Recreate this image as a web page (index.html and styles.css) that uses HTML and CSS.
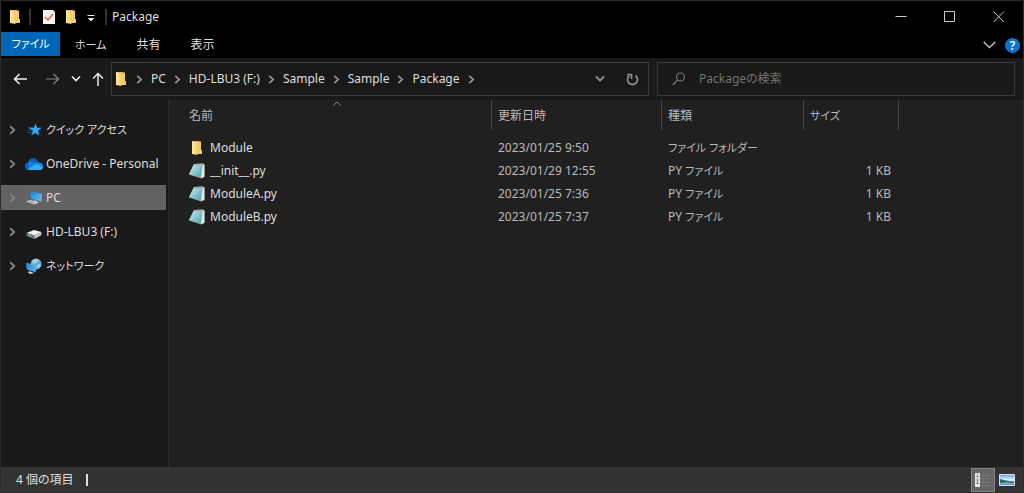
FILE: index.html
```html
<!DOCTYPE html>
<html lang="ja">
<head>
<meta charset="utf-8">
<meta name="viewport" content="width=device-width, initial-scale=1">
<title>Package</title>
<link rel="stylesheet" href="styles.css">
</head>
<body>
<svg class="defs" aria-hidden="true">
  <defs>
    <linearGradient id="folder-front" x1="0" x2="1"><stop offset="0" stop-color="#ffe9a0"/><stop offset="1" stop-color="#f4cf6b"/></linearGradient>
    <linearGradient id="note-page" x1="0" y1="0" x2="1" y2="1"><stop offset="0" stop-color="#d5f2f7"/><stop offset="1" stop-color="#3f9fb3"/></linearGradient>
    <linearGradient id="screen" x1="0" y1="0" x2="1" y2="1"><stop offset="0" stop-color="#1a86dc"/><stop offset="1" stop-color="#52bcff"/></linearGradient>
    <linearGradient id="landscape" x1="0" y1="0" x2="0" y2="1"><stop offset="0" stop-color="#5c9df0"/><stop offset=".5" stop-color="#e6f5fb"/><stop offset="1" stop-color="#3b87c4"/></linearGradient>
    <symbol id="folder" viewBox="0 0 12 16"><path d="M1 1h7v13H1z" fill="#e3b552"/><path d="M6 1.500h4V10h1v4H6z" fill="#f0cb67"/><path d="M1 1l5.500 2v12L1 14z" fill="url(#folder-front)"/></symbol>
    <symbol id="note" viewBox="0 0 16 16"><path d="M5 1l9-.5 1.500 1V14l-3 1.500L0 11.500z" fill="#b9a67c"/><path d="M5 1l9-.3L11.500 14.500 0 11z" fill="url(#note-page)"/><path d="M14 1l1.300.8V13.500L12 15z" fill="#e6eeee"/><path d="M5 1l9-.3-.3 1.500-9.400.5z" fill="#9badb0"/></symbol>
    <symbol id="chevron" viewBox="0 0 6 8"><path d="M1 .8L4.500 4 1 7.200" fill="none" stroke="currentColor" stroke-width="1.500"/></symbol>
  </defs>
</svg>
<div class="window">
  <header class="titlebar">
    <svg class="folder" aria-hidden="true"><use href="#folder"/></svg>
    <span class="divider"></span>
    <button class="quick" aria-label="プロパティ"><svg width="12" height="16" viewBox="0 0 12 16"><path d="M0 1h10l2 2v12H0z" fill="#f3f3f3"/><path d="M10 1v2h2z" fill="#aaa"/><path d="M2 8l3 3 5-6" fill="none" stroke="#e3663b" stroke-width="1.500"/></svg></button>
    <button class="quick" aria-label="新しいフォルダー"><svg class="folder"><use href="#folder"/></svg></button>
    <button class="quick customize" aria-label="カスタマイズ"><svg width="8" height="8" viewBox="0 0 8 8"><path d="M.5 1.500h7M1.500 4.500h5L4 6.800z" fill="#eee" stroke="#eee"/></svg></button>
    <span class="divider"></span>
    <h1 class="title">Package</h1>
    <div class="controls">
      <button class="control" aria-label="最小化"><svg width="12" height="12" viewBox="0 0 12 12"><path d="M.5 5.500h11"/></svg></button>
      <button class="control" aria-label="最大化"><svg width="12" height="12" viewBox="0 0 12 12"><path d="M.5 .5h10v10H.5z"/></svg></button>
      <button class="control" aria-label="閉じる"><svg width="12" height="12" viewBox="0 0 12 12"><path d="M.5 .5l10.500 10.500M11 .5L.5 11"/></svg></button>
    </div>
  </header>
  <nav class="ribbon">
    <button class="tab active kana">ファイル</button>
    <button class="tab kana">ホーム</button>
    <button class="tab">共有</button>
    <button class="tab">表示</button>
    <div class="ribbon-end">
      <button class="icon-button" aria-label="リボンの展開"><svg width="13" height="8" viewBox="0 0 13 8"><path d="M.7 1l5.800 5.500L12.300 1" fill="none" stroke="#c0c0c0" stroke-width="1.500"/></svg></button>
      <button class="help" aria-label="ヘルプ">?</button>
    </div>
  </nav>
  <div class="toolbar">
    <div class="history">
      <button class="icon-button" aria-label="戻る"><svg width="15" height="12" viewBox="0 0 15 12"><path d="M14 6H1.500M6.500 1l-5 5 5 5" fill="none" stroke="#f0f0f0" stroke-width="1.500"/></svg></button>
      <button class="icon-button" aria-label="進む"><svg width="15" height="12" viewBox="0 0 15 12"><path d="M1 6h12.500M8.500 1l5 5-5 5" fill="none" stroke="#858585" stroke-width="1.200"/></svg></button>
      <button class="icon-button" aria-label="最近表示した場所"><svg width="10" height="8" viewBox="0 0 10 8"><path d="M1 1.500l4 4 4-4" fill="none" stroke="#eee" stroke-width="1.600"/></svg></button>
      <button class="icon-button" aria-label="上へ"><svg width="12" height="15" viewBox="0 0 12 15"><path d="M6 14V1.500M1 6.500l5-5 5 5" fill="none" stroke="#eee" stroke-width="1.500"/></svg></button>
    </div>
    <div class="address">
      <svg class="folder" aria-hidden="true"><use href="#folder"/></svg>
      <svg class="crumb-arrow"><use href="#chevron"/></svg>
      <a href="#">PC</a><svg class="crumb-arrow"><use href="#chevron"/></svg>
      <a href="#">HD-LBU3 (F:)</a><svg class="crumb-arrow"><use href="#chevron"/></svg>
      <a href="#">Sample</a><svg class="crumb-arrow"><use href="#chevron"/></svg>
      <a href="#">Sample</a><svg class="crumb-arrow"><use href="#chevron"/></svg>
      <a href="#">Package</a><svg class="crumb-arrow"><use href="#chevron"/></svg>
      <div class="address-end">
        <button class="address-button" aria-label="以前の場所"><svg width="10" height="8" viewBox="0 0 10 8"><path d="M1 1.500l4 4 4-4" fill="none" stroke="#8c8c8c" stroke-width="2"/></svg></button>
        <button class="address-button" aria-label="更新"><svg width="13" height="13" viewBox="0 0 13 13"><path d="M9.500 2.500A5 5 0 1 1 3.500 2.500" fill="none" stroke="#8c8c8c" stroke-width="1.800"/><path d="M1 1.500h4.500V6" fill="none" stroke="#8c8c8c" stroke-width="1.600"/></svg></button>
      </div>
    </div>
    <label class="search">
      <svg width="14" height="14" viewBox="0 0 14 14" aria-hidden="true"><g fill="none" stroke="#777" stroke-width="1.200"><circle cx="8.500" cy="5" r="4"/><path d="M5.500 8L.7 13"/></g></svg>
      <input type="search" placeholder="Packageの検索" aria-label="Packageの検索">
    </label>
  </div>
  <div class="body">
    <nav class="sidebar">
      <a class="place" href="#"><svg class="expand"><use href="#chevron"/></svg><svg class="place-icon" viewBox="0 0 16 16"><path d="M9.500 1.500l1.600 4.200 4.700.1-3.700 2.900 1.200 4.800-4-2.500-4 2.600 1.400-4.800L3 5.900l4.800-.2z" fill="#2fa8f5"/><path d="M2 5.500h5M1 8h6M2 10.500h5" stroke="#1673b8" stroke-width=".7"/></svg><span class="kana">クイック アクセス</span></a>
      <a class="place" href="#"><svg class="expand"><use href="#chevron"/></svg><svg class="place-icon cloud" viewBox="0 0 16 11"><path d="M3.500 11A3.600 3.600 0 0 1 2.500 3.900 5 5 0 0 1 11.500 2.500L13 5l2 3-2 3z" fill="#0a62b9"/><path d="M3 3.900c2-1 4 0 5.500 1L13 4.200A3.400 3.400 0 0 1 13 11H3z" fill="#1684d8"/><path d="M2 10.500L10 5.500l5.700 2.500A2.500 2.500 0 0 1 13.500 11h-10z" fill="#35aaf1"/></svg><span>OneDrive - Personal</span></a>
      <a class="place selected" href="#"><svg class="expand"><use href="#chevron"/></svg><svg class="place-icon" viewBox="0 0 16 16"><path d="M4.500 1L14.500 3.500v8L5 8.500z" fill="url(#screen)"/><path d="M14.500 3.500l1 .3v8l-1-.3zM8 10l3 1v1.500l-3-1z" fill="#b4c5d0"/><path d="M0 11.500l4-1.500 9 2.500-4.500 2z" fill="#d8dfe4"/><path d="M2 11.500l7 2M3.500 11l7 2" stroke="#7c8b96" stroke-width=".6"/></svg><span>PC</span></a>
      <a class="place" href="#"><svg class="expand"><use href="#chevron"/></svg><svg class="place-icon" viewBox="0 0 16 16"><path d="M.5 9L8 6l7.500 2-7 3.500z" fill="#f1f1f1"/><path d="M.5 9l8 2.500V15l-8-3z" fill="#777b7b"/><path d="M8.500 11.500l7-3.500v3l-7 4z" fill="#c7c7c7"/><path d="M3 11.500l2 .7" stroke="#4bd65c"/></svg><span>HD-LBU3 (F:)</span></a>
      <a class="place" href="#"><svg class="expand"><use href="#chevron"/></svg><svg class="place-icon" viewBox="0 0 16 16"><circle cx="10" cy="6" r="5.500" fill="#63aed0"/><path d="M6 3c3-3 6-2 7-1l-3 3-3 1zM12 6l3 1-2 3-2-1z" fill="#a5d3df"/><path d="M.5 5l9 3v6L1 11z" fill="url(#screen)" stroke="#6bbcf5" stroke-width=".5"/><path d="M3 13l5 2-3 1-3-1z" fill="#c5d0d8"/></svg><span class="kana">ネットワーク</span></a>
    </nav>
    <main class="files">
      <table class="list">
        <colgroup><col class="col-name"><col class="col-date"><col class="col-type"><col class="col-size"></colgroup>
        <thead><tr><th>名前<svg class="sort" viewBox="0 0 8 5"><path d="M.5 4.500L4 1l3.500 3.500" fill="none" stroke="#888"/></svg></th><th>更新日時</th><th>種類</th><th class="kana">サイズ</th></tr></thead>
        <tbody>
          <tr><td class="name"><div class="entry"><svg class="file-icon"><use href="#folder"/></svg>Module</div></td><td>2023/01/25 9:50</td><td class="kana">ファイル フォルダー</td><td class="size"></td></tr>
          <tr><td class="name"><div class="entry"><svg class="file-icon"><use href="#note"/></svg>__init__.py</div></td><td>2023/01/29 12:55</td><td>PY <span class="kana">ファイル</span></td><td class="size">1 KB</td></tr>
          <tr><td class="name"><div class="entry"><svg class="file-icon"><use href="#note"/></svg>ModuleA.py</div></td><td>2023/01/25 7:36</td><td>PY <span class="kana">ファイル</span></td><td class="size">1 KB</td></tr>
          <tr><td class="name"><div class="entry"><svg class="file-icon"><use href="#note"/></svg>ModuleB.py</div></td><td>2023/01/25 7:37</td><td>PY <span class="kana">ファイル</span></td><td class="size">1 KB</td></tr>
        </tbody>
      </table>
    </main>
  </div>
  <footer class="status">
    <span class="count">4 個の項目</span>
    <div class="views">
      <button class="view active" aria-label="詳細"><svg width="16" height="16" viewBox="0 0 16 16"><path d="M0 1h5v14H0z" fill="#e8e8e8"/><path d="M1 4.500h3M1 8h3M1 11.500h3" stroke="#888"/><path d="M2 2.500h1" stroke="#288cad"/><path d="M2 6.200h1" stroke="#a58530"/><path d="M2 9.800h1" stroke="#d33" stroke-width="2"/><path d="M6 3.500h4M11 3.500h4M6 6.500h4M11 6.500h4M6 10.500h4M11 10.500h4M6 13.500h4M11 13.500h4" stroke="#7c7c7c"/></svg></button>
      <button class="view" aria-label="大アイコン"><svg width="16" height="12" viewBox="0 0 16 12"><path d="M.5 .5h15v11H.5z" fill="url(#landscape)" stroke="#ddd"/><path d="M1 5l4 1 5 1 5 .5V9L8 8.500 1 9z" fill="#2e6b64"/></svg></button>
    </div>
  </footer>
</div>
</body>
</html>
```
FILE: styles.css
```css
* { box-sizing: border-box; }

body {
  margin: 0;
  background: #000;
  color: #dedede;
  font: 12px/18px "Noto Sans", "Noto Sans CJK JP", sans-serif;
  font-feature-settings: "palt";
}

button, input { font: inherit; font-feature-settings: inherit; color: inherit; }
button { padding: 0; border: 0; background: none; }
a { color: inherit; text-decoration: none; }
svg { display: block; flex: none; }
.defs { position: absolute; width: 0; height: 0; }
.kana { font-size: 11px; }

.window {
  display: flex;
  flex-direction: column;
  min-height: 100vh;
  border: 1px solid #2b2d2a;
}

.folder { width: 14px; height: 16px; }

/* Title bar */
.titlebar { display: flex; align-items: center; height: 31px; padding-left: 7px; }
.divider { width: 2px; height: 16px; margin-left: 7px; background: #333; }
.quick { margin-left: 12px; }
.quick + .quick { margin-left: 9px; }
.divider + .title { margin: 0 0 0 5px; font-size: 12px; font-weight: 400; }
.customize svg { margin-top: 3px; }
.customize + .divider { margin-left: 10px; }
.controls { display: flex; align-self: stretch; margin-left: auto; }
.control { display: grid; place-items: center; width: 49px; }
.control svg { fill: none; stroke: #ccc; }

/* Ribbon */
.ribbon { display: flex; height: 26px; }
.tab { height: 26px; padding: 0 15px; align-self: flex-start; }
.tab.active { width: 59px; height: 24px; padding: 0; background: #0067b8; color: #fff; }
.ribbon-end { display: flex; align-items: center; gap: 9px; margin-left: auto; padding-right: 3px; }
.icon-button { display: grid; place-items: center; }
.help { width: 15px; height: 15px; border-radius: 50%; background: #0873d1; color: #fff; font-weight: 600; line-height: 15px; }

/* Address and search */
.toolbar { display: flex; height: 42px; padding: 4px 8px 4px 12px; background: #191919; }
.history { display: flex; align-items: center; justify-content: flex-end; width: 91px; margin-right: 7px; }
.icon-button + .icon-button { margin-left: 11px; }
.history .icon-button:first-child { margin-right: 6px; }
.address { display: flex; align-items: center; flex: 3 1 0; min-width: 0; padding-left: 2px; border: 1px solid #3b3b3b; white-space: nowrap; }
.crumb-arrow { width: 23px; height: 9px; color: #999; }
.address-end { display: flex; align-self: stretch; margin-left: auto; }
.address-button { display: grid; place-items: center; width: 32px; }
.search { display: flex; align-items: center; flex: 2 1 0; min-width: 0; margin-left: 8px; border: 1px solid #3b3b3b; }
.search svg { margin-left: 14px; }
.search input { flex: 1; min-width: 0; padding: 0; margin-left: 13px; border: 0; outline: 0; background: none; }
.search input::placeholder { color: #737373; opacity: 1; }

/* Panes */
.body { display: flex; flex: 1; }
.sidebar { display: flex; flex-direction: column; gap: 9px; width: 168px; padding: 17px 2px 0 0; background: #191919; border-right: 1px solid #2b2b2b; }
.place { display: flex; align-items: center; height: 25px; padding-left: 8px; white-space: nowrap; }
.place.selected { background: #626262; }
.expand { width: 7px; height: 10px; color: #858585; }
.place-icon { width: 16px; height: 16px; margin: 0 4px 0 10px; }
.place-icon.cloud { width: 18px; height: 12px; margin: 0 3px 0 9px; }
.files { flex: 1; min-width: 0; background: #202020; }

.list { table-layout: fixed; width: 730px; border-collapse: separate; border-spacing: 0; color: #bababa; }
.col-name { width: 323px; }
.col-date { width: 170px; }
.col-type { width: 142px; }
.col-size { width: 95px; }
.list th { position: relative; height: 30px; padding: 2px 6px 0; border-right: 1px solid #444; font-weight: 400; text-align: left; }
.list th:first-child { padding-left: 20px; }
.list tbody::before { content: ""; display: block; height: 6px; }
.list td { height: 23px; padding: 0 6px; white-space: nowrap; }
.list .name { padding-left: 20px; color: #dedede; }
.list .size { padding-right: 8px; text-align: right; }
.entry { display: flex; align-items: center; gap: 5px; }
.file-icon { width: 16px; height: 16px; }
.sort { position: absolute; top: 1px; right: 150px; width: 8px; height: 5px; }

/* Status bar */
.status { display: flex; align-items: center; height: 25px; padding: 1px 0 0 15px; background: #333; }
.count { padding-right: 12px; border-right: 2px solid #ddd; line-height: 12px; }
.views { display: flex; align-self: stretch; margin-left: auto; padding-right: 5px; }
.view { display: grid; place-items: center; width: 23px; }
.view.active { width: 24px; border: 1px solid #838383; background: #666; }
```
